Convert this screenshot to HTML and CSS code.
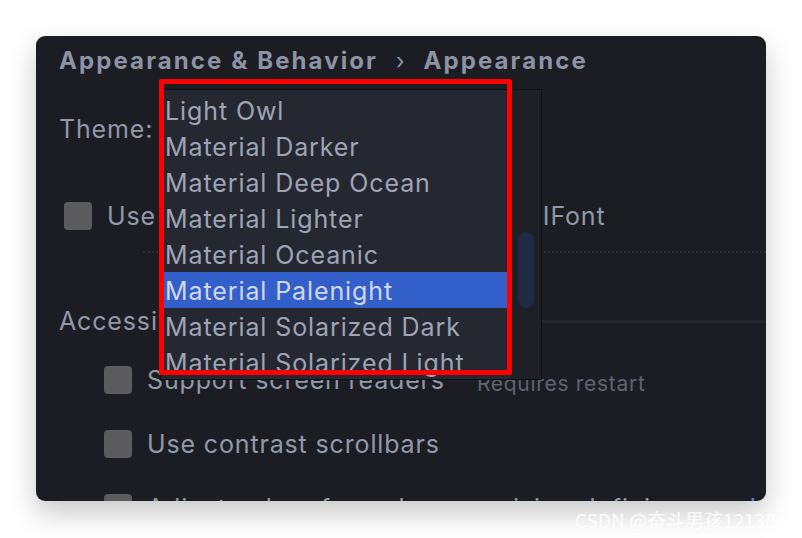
FILE: index.html
```html
<!DOCTYPE html>
<html>
<head>
<meta charset="utf-8">
<link rel="stylesheet" href="styles.css">
</head>
<body>
<div class="page">
  <div class="window">
    <div class="content">
      <div class="crumbs">
        <span>Appearance &amp; Behavior</span>
        <span class="sep">›</span>
        <span>Appearance</span>
      </div>
      <div class="row theme-row">Theme:</div>
      <div class="row font-row">
        <span class="box"></span>
        <span class="label">Use custom font:</span>
        <span class="font-name">.AppleSystemUIFont</span>
      </div>
      <div class="dotted"></div>
      <div class="row section">
        <span>Accessibility</span>
        <span class="rule"></span>
      </div>
      <div class="row sub">
        <span class="box"></span>
        <span class="label">Support screen readers</span>
        <span class="hint">Requires restart</span>
      </div>
      <div class="row sub">
        <span class="box"></span>
        <span class="label">Use contrast scrollbars</span>
      </div>
      <div class="row sub">
        <span class="box"></span>
        <span class="label">Adjust colors for red-green vision deficiency</span>
        <span class="link">How it works</span>
      </div>
    </div>

    <div class="popup">
      <ul class="list">
        <li>Light Owl</li>
        <li>Material Darker</li>
        <li>Material Deep Ocean</li>
        <li>Material Lighter</li>
        <li>Material Oceanic</li>
        <li class="selected">Material Palenight</li>
        <li>Material Solarized Dark</li>
        <li>Material Solarized Light</li>
      </ul>
      <div class="track"><div class="thumb"></div></div>
    </div>
  </div>
  <div class="mark"></div>
  <div class="watermark">CSDN @奋斗男孩12138</div>
</div>
</body>
</html>
```

FILE: styles.css
```css
html, body {
  margin: 0;
  padding: 0;
  background: #ffffff;
}
.page {
  position: relative;
  width: 802px;
  height: 538px;
  overflow: hidden;
  font-family: Inter, "Noto Sans", sans-serif;
}
.window {
  position: relative;
  margin: 36px 0 0 36px;
  width: 730px;
  height: 465px;
  background: #1b1d22;
  border-radius: 9px;
  overflow: hidden;
  box-shadow: 0 12px 28px rgba(0, 0, 0, 0.22);
}
.content {
  padding: 10px 0 0 23px;
  color: #9298aa;
  font-size: 25px;
  letter-spacing: 0.85px;
}
.crumbs {
  height: 30px;
  line-height: 30px;
  font-size: 24px;
  font-weight: 700;
  letter-spacing: 2.1px;
  color: #8d93a5;
  display: flex;
  white-space: nowrap;
}
.crumbs .sep {
  font-weight: 400;
  letter-spacing: 0;
  margin: 0 19px 0 18px;
  font-size: 22px;
}
.row {
  display: flex;
  align-items: center;
  white-space: nowrap;
}
.theme-row {
  margin-top: 38px;
  height: 30px;
}
.font-row {
  margin-top: 57px;
  height: 30px;
  padding-left: 5px;
}
.font-name {
  margin-left: 28px;
}
.box {
  width: 28px;
  height: 28px;
  border-radius: 4px;
  background: #5b5b5d;
  flex: none;
}
.label {
  margin-left: 15px;
}
.dotted {
  margin: 20px 0 0 84px;
  height: 0;
  border-top: 2px dotted #2b2e35;
}
.section {
  margin-top: 53px;
  height: 30px;
}
.section .rule {
  flex: 1;
  height: 3px;
  background: #25272d;
  margin-left: 14px;
}
.sub {
  padding-left: 45px;
  height: 30px;
}
.section + .sub {
  margin-top: 29px;
}
.sub + .sub {
  margin-top: 34px;
}
.hint {
  margin-left: 32px;
  padding-top: 6px;
  color: #60646f;
  font-size: 21px;
  letter-spacing: 0.7px;
}
.link {
  margin-left: 38px;
  color: #4a86e8;
}
.popup {
  position: absolute;
  left: 124px;
  top: 53px;
  width: 380px;
  height: 289px;
  border: 1px solid #0f1013;
  background: #1e2026;
  display: flex;
  overflow: hidden;
}
.list {
  list-style: none;
  margin: 0;
  padding: 2px 0 0 0;
  width: 349px;
  background: #252831;
  font-size: 25px;
  letter-spacing: 0.9px;
  color: #9ea4b6;
}
.list li {
  height: 36px;
  line-height: 38px;
  padding-left: 4px;
  white-space: nowrap;
}
.list li.selected {
  background: #335fcb;
  color: #d2d7e6;
}
.track {
  flex: 1;
  position: relative;
  background: #1e2026;
}
.thumb {
  position: absolute;
  left: 8px;
  top: 142px;
  width: 16px;
  height: 76px;
  border-radius: 8px;
  background: #1f2a44;
}
.mark {
  position: absolute;
  left: 159px;
  top: 79px;
  width: 343px;
  height: 286px;
  border: 5px solid #ff0000;
  border-radius: 2px;
}
.watermark {
  position: absolute;
  left: 575px;
  top: 506px;
  font-size: 19px;
  color: rgba(255, 255, 255, 0.85);
  font-family: "Noto Sans CJK SC", sans-serif;
  white-space: nowrap;
}
```
